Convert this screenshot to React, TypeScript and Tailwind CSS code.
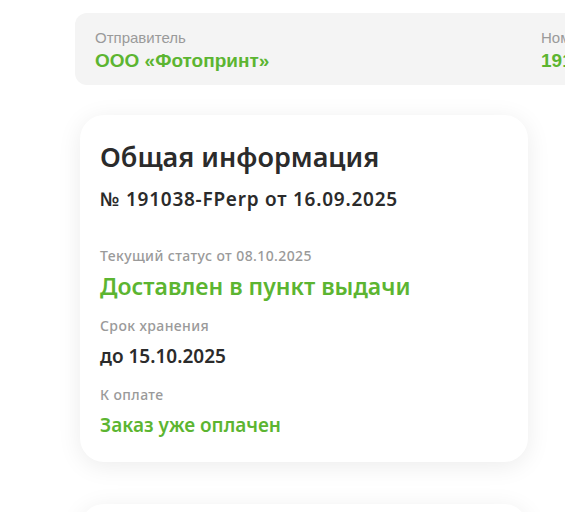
export default function App() {
  const rows = [
    { label: "Срок хранения", value: "до 15.10.2025", green: false },
    { label: "К оплате", value: "Заказ уже оплачен", green: true },
  ];

  return (
    <div className="min-h-screen overflow-hidden bg-white pt-[13px] pl-[75px]">
      {/* Sender strip */}
      <div className="flex w-[700px] rounded-xl bg-[#f4f4f4] px-5 pt-[16px] pb-[12px] font-['Liberation_Sans',Arial,sans-serif]">
        <div className="w-[446px] shrink-0">
          <div className="text-[15px] leading-[18px] text-[#9a9a9a]">Отправитель</div>
          <div className="mt-[2px] text-[19px] font-bold leading-6 text-[#5cb531]">ООО «Фотопринт»</div>
        </div>
        <div className="shrink-0">
          <div className="text-[15px] leading-[18px] text-[#9a9a9a]">Номер заказа</div>
          <div className="mt-[2px] text-[19px] font-bold leading-6 text-[#5cb531]">191038-FPerp</div>
        </div>
      </div>

      {/* General info */}
      <div className="mt-[30px] ml-[5px] w-[448px] rounded-[24px] bg-white px-5 pt-[24px] pb-[23px] font-['Noto_Sans',sans-serif] shadow-[0_4px_24px_rgba(0,0,0,0.08)]">
        <h1 className="text-[27px] font-semibold leading-9 text-[#2b2b2b]">Общая информация</h1>
        <div className="mt-[10px] text-[19px] font-semibold leading-7 tracking-[0.75px] text-[#2b2b2b]">№ 191038-FPerp от 16.09.2025</div>

        <div className="mt-[34px] text-[14px] font-medium leading-[18px] tracking-[0.4px] text-[#9a9a9a]">Текущий статус от 08.10.2025</div>
        <div className="mt-[6px] text-[23px] font-semibold leading-[30px] text-[#5cb531]">Доставлен в пункт выдачи</div>

        {rows.map((row) => (
          <div key={row.label} className="mt-[16px]">
            <div className="text-[14px] font-medium leading-[18px] tracking-[0.4px] text-[#9a9a9a]">{row.label}</div>
            <div
              className={`mt-[7px] text-[19px] font-semibold leading-7 ${
                row.green ? "text-[#5cb531]" : "text-[#2b2b2b]"
              }`}
            >
              {row.value}
            </div>
          </div>
        ))}
      </div>

      {/* Next card */}
      <div className="mt-[42px] ml-[5px] h-[120px] w-[448px] rounded-[24px] bg-white shadow-[0_4px_24px_rgba(0,0,0,0.08)]" />
    </div>
  );
}
